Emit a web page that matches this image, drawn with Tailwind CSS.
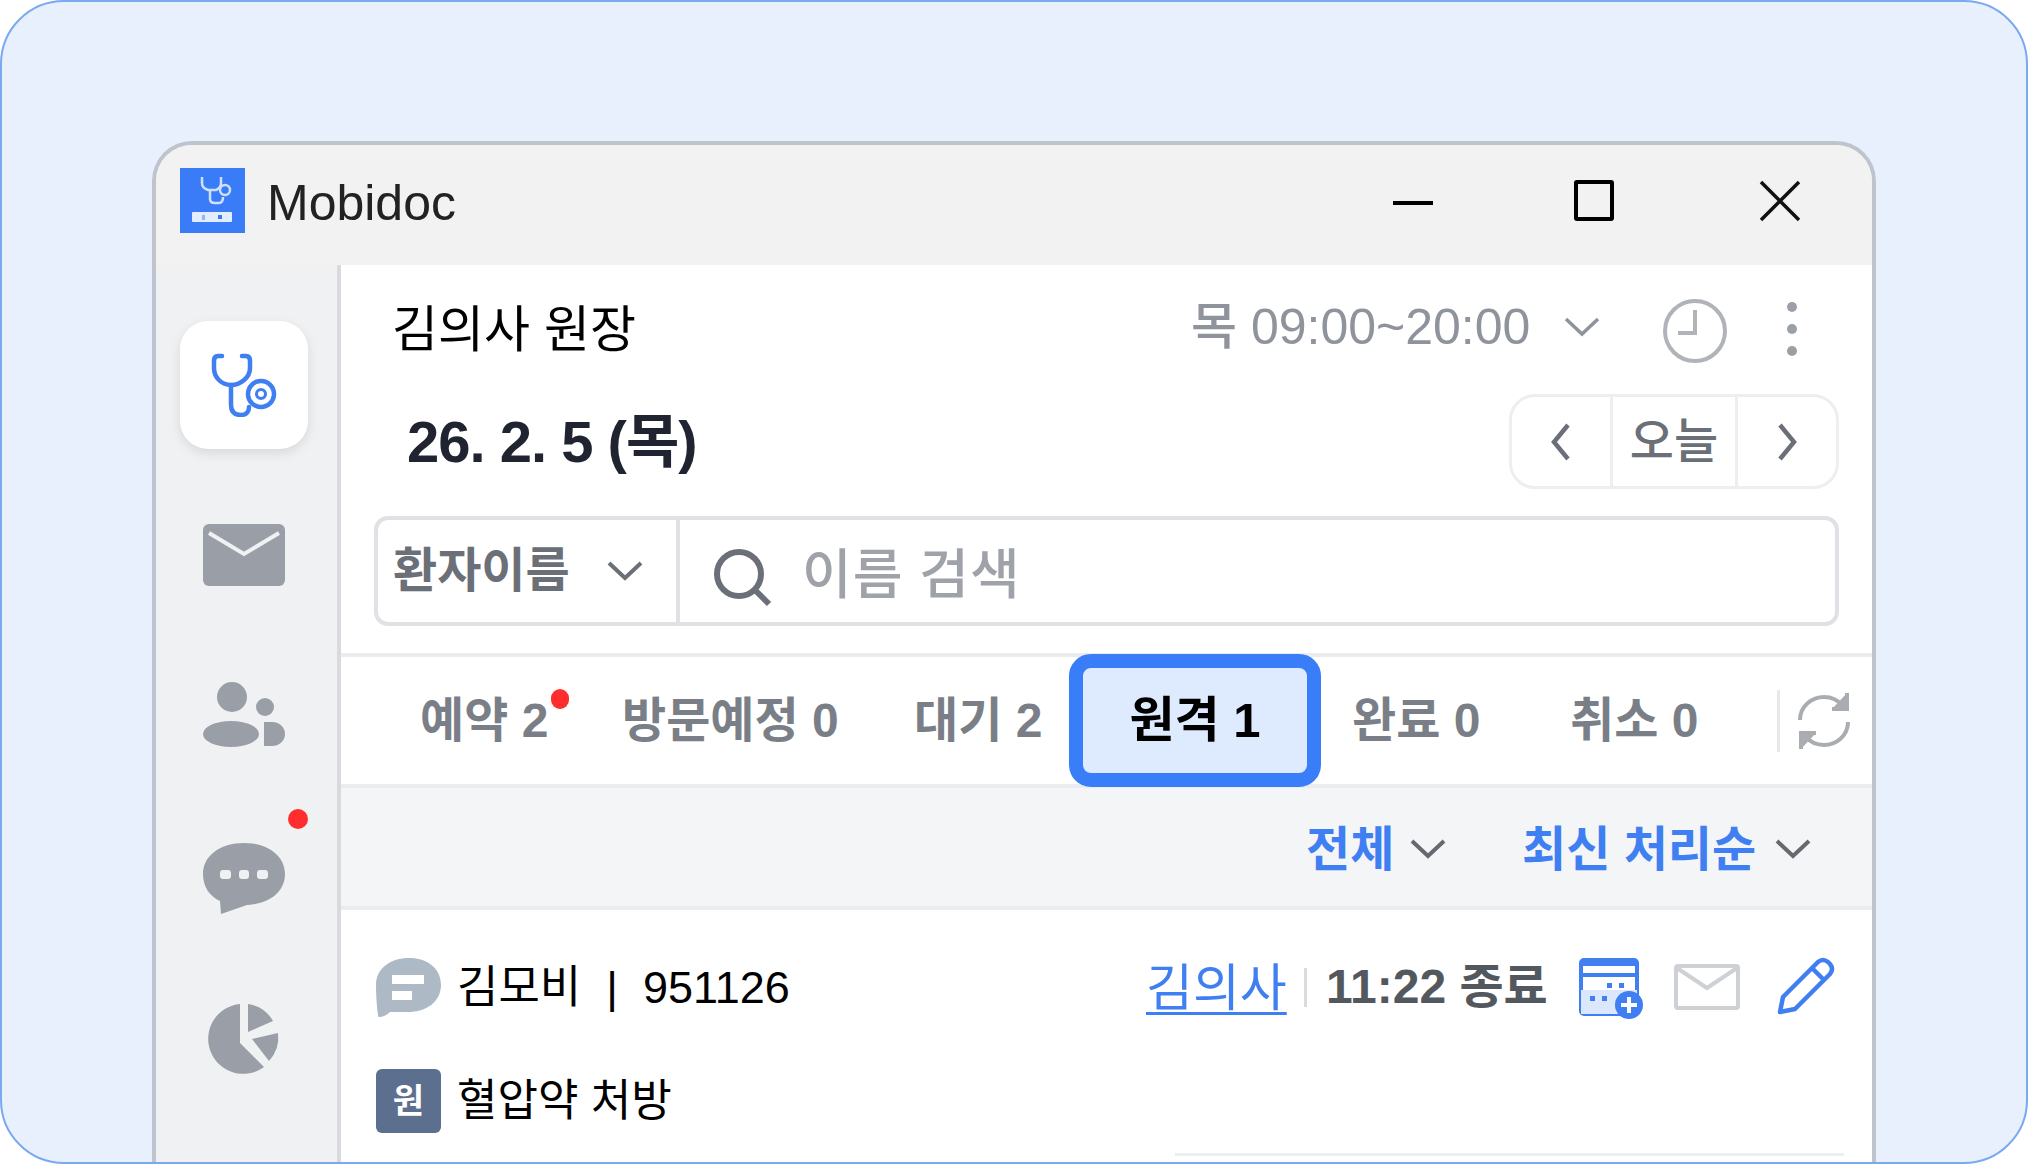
<!DOCTYPE html>
<html lang="ko">
<head>
<meta charset="utf-8">
<script src="https://cdn.jsdelivr.net/npm/@tailwindcss/browser@4"></script>
</head>
<body class="m-0">
<div class="w-[2028px] h-[1164px] overflow-hidden rounded-[64px] border-2 border-[#7aa9f0] bg-[#e8f0fe] pl-[150px] pt-[139px] font-['Liberation_Sans','Noto_Sans_CJK_KR',sans-serif] text-black">
  <div class="w-[1724px] h-[1100px] rounded-t-[40px] border-4 border-b-0 border-[#bfc4cc] overflow-hidden flex flex-col blur-[0.6px]">
    <!-- title bar -->
    <div class="h-[120px] shrink-0 bg-[#f2f2f2] flex items-center pl-[24px]">
      <svg class="w-[65px] h-[65px] shrink-0 mb-[9px]" viewBox="0 0 65 65">
        <rect width="65" height="65" fill="#3a7cf8"/>
        <g fill="none" stroke="#cfe0fd" stroke-width="2.5"><path d="M22 9v6q0 5 6 7h8q5-2 5-7V9"/><path d="M30 22v9q0 4 5 4h4q4 0 4-6"/><circle cx="45" cy="22" r="5"/></g>
        <rect x="12" y="44" width="40" height="10" rx="1" fill="#e3edfe"/>
        <rect x="22" y="47" width="3" height="5" fill="#8fb5fb"/><rect x="38" y="47" width="4" height="4" fill="#3a7cf8"/>
      </svg>
      <span class="ml-[22px] text-[50px] leading-none text-[#222] w-[1126px] mb-[4px]">Mobidoc</span>
      <span class="block w-[40px] h-[4px] bg-black mb-[4px]"></span>
      <span class="block w-[40px] h-[41px] ml-[141px] border-4 border-black rounded-[3px] mb-[10px]"></span>
      <svg class="w-[42px] h-[42px] ml-[145px] mb-[8px]" viewBox="0 0 42 42" fill="none" stroke="#111" stroke-width="3.5"><path d="M2 2l38 38M40 2L2 40"/></svg>
    </div>
    <div class="flex flex-1 min-h-0">
      <!-- sidebar -->
      <div class="w-[185px] shrink-0 bg-[#f0f1f3] border-r-4 border-[#d8dade] flex flex-col items-center pr-[5px]">
        <div class="mt-[56px] w-[128px] h-[128px] rounded-[28px] bg-white shadow-[0_4px_12px_rgba(0,0,0,0.10)] flex items-center justify-center">
          <svg class="w-[66px] h-[64px]" viewBox="0 0 66 64" fill="none" stroke="#3f7ff2" stroke-width="4.5" stroke-linecap="round">
            <path d="M11 3H7Q3 3 3 8v7c0 10 8 17 17 17s19-7 19-17V8q0-5-4-5h-4"/>
            <path d="M20 32v20c0 7 4 10 10 10s8-4 8-8"/>
            <circle cx="50" cy="41" r="13"/><circle cx="50" cy="41" r="4.5" stroke-width="3"/>
          </svg>
        </div>
        <svg class="mt-[75px] w-[82px] h-[62px]" viewBox="0 0 82 62"><rect width="82" height="62" rx="6" fill="#9a9ea6"/><path d="M6 9l35 21L76 9" fill="none" stroke="#f0f1f3" stroke-width="4"/></svg>
        <svg class="mt-[96px] w-[82px] h-[66px]" viewBox="0 0 82 66" fill="#9a9ea6"><circle cx="29" cy="15" r="15"/><ellipse cx="28" cy="52" rx="28" ry="13"/><circle cx="62" cy="25" r="9"/><path d="M61 40h8c8 0 13 6 13 12s-5 12-13 12h-8z"/></svg>
        <div class="relative mt-[95px] w-[82px] h-[74px]">
          <span class="absolute left-[85px] -top-[34px] w-[20px] h-[20px] rounded-full bg-[#ff2d2d]"></span>
          <svg class="w-[82px] h-[74px]" viewBox="0 0 82 74"><path d="M41 0c24 0 41 13 41 31S66 61 44 62L18 71l-1-13C6 53 0 43 0 31 0 13 17 0 41 0z" fill="#9a9ea6"/><g fill="#f0f1f3"><rect x="17" y="27" width="11" height="9" rx="3"/><rect x="36" y="27" width="10" height="9" rx="3"/><rect x="54" y="27" width="11" height="9" rx="3"/></g></svg>
        </div>
        <svg class="mt-[84px] ml-[4px] w-[78px] h-[76px]" viewBox="0 0 78 76" fill="#9a9ea6"><path d="M33 3V42L57 66A35 35 0 1 1 33 3z"/><path d="M41 3A35 35 0 0 1 66 20L41 31z"/><path d="M45 38L71 32A35 35 0 0 1 62 60z"/></svg>
      </div>
      <!-- main -->
      <div class="flex-1 min-w-0 bg-white flex flex-col">
        <div class="h-[124px] shrink-0 flex items-center pl-[51px]">
          <span class="text-[50px] leading-none w-[799px] whitespace-nowrap mt-[5px]">김의사 원장</span>
          <span class="text-[50px] leading-none text-[#8f949c] font-medium whitespace-nowrap w-[373px]">목 09:00~20:00</span>
          <svg class="w-[36px] h-[20px] shrink-0" viewBox="0 0 36 20" fill="none" stroke="#8f949c" stroke-width="3.5"><path d="M2 2l16 15L34 2"/></svg>
          <svg class="ml-[62px] mt-[8px] w-[66px] h-[66px] shrink-0" viewBox="0 0 66 66" fill="none" stroke="#b0b3b8" stroke-width="4"><circle cx="33" cy="33" r="30"/><path d="M33 12v23H16"/></svg>
          <span class="ml-[59px] mt-[4px] flex flex-col gap-[12px] shrink-0"><i class="block w-[10px] h-[10px] rounded-full bg-[#9ba0a7]"></i><i class="block w-[10px] h-[10px] rounded-full bg-[#9ba0a7]"></i><i class="block w-[10px] h-[10px] rounded-full bg-[#9ba0a7]"></i></span>
        </div>
        <div class="h-[105px] shrink-0 flex items-center justify-between pl-[66px] pr-[33px]">
          <span class="text-[58px] leading-none font-semibold text-[#1f2430] tracking-[-1px] whitespace-nowrap">26. 2. 5 (목)</span>
          <div class="w-[330px] h-[95px] rounded-[26px] border-[3px] border-[#eceef0] flex items-center">
            <span class="w-[101px] h-full border-r-[3px] border-[#eceef0] flex items-center justify-center"><svg class="w-[20px] h-[38px]" viewBox="0 0 20 38" fill="none" stroke="#6b7078" stroke-width="4.5"><path d="M17 2L3 19l14 17"/></svg></span>
            <span class="w-[125px] h-full border-r-[3px] border-[#eceef0] flex items-center justify-center text-[48px] font-medium text-[#6b7078]">오늘</span>
            <span class="flex-1 flex items-center justify-center"><svg class="w-[20px] h-[38px]" viewBox="0 0 20 38" fill="none" stroke="#6b7078" stroke-width="4.5"><path d="M3 2l14 17L3 36"/></svg></span>
          </div>
        </div>
        <div class="mt-[22px] ml-[33px] mr-[33px] h-[110px] shrink-0 rounded-[14px] border-4 border-[#dfe1e5] flex items-center">
          <div class="w-[302px] h-full border-r-4 border-[#dfe1e5] flex items-center pl-[15px]">
            <span class="text-[48px] leading-none font-semibold text-[#6b7078] w-[214px] whitespace-nowrap">환자이름</span>
            <svg class="w-[36px] h-[20px] shrink-0" viewBox="0 0 36 20" fill="none" stroke="#6b7078" stroke-width="4"><path d="M2 2l16 15L34 2"/></svg>
          </div>
          <svg class="ml-[33px] mt-[14px] w-[60px] h-[60px] shrink-0" viewBox="0 0 60 60" fill="none" stroke="#6b7078" stroke-width="6"><circle cx="26" cy="26" r="22"/><path d="M42 42l14 14"/></svg>
          <span class="ml-[29px] mt-[8px] text-[54px] leading-none font-medium text-[#9fa3a9] whitespace-nowrap tracking-[1px]">이름 검색</span>
        </div>
        <div class="mt-[27px] h-[135px] shrink-0 border-y-4 border-[#ebecef] flex items-center pl-[79px] text-[48px] font-semibold text-[#7a7f87]">
          <span class="relative w-[202px] whitespace-nowrap">예약 2<i class="absolute left-[131px] top-[4px] w-[18px] h-[20px] rounded-full bg-[#ff2d2d]"></i></span>
          <span class="w-[292px] whitespace-nowrap">방문예정 0</span>
          <span class="w-[155px] whitespace-nowrap">대기 2</span>
          <span class="w-[252px] h-[133px] -my-[5px] shrink-0 rounded-[22px] border-[14px] border-[#397df8] bg-[#deeafd] flex items-center justify-center text-black text-[49px] font-bold whitespace-nowrap">원격 1</span>
          <span class="ml-[31px] w-[218px] whitespace-nowrap">완료 0</span>
          <span class="w-[207px] whitespace-nowrap">취소 0</span>
          <span class="block w-[3px] h-[62px] bg-[#e7e8ea]"></span>
          <svg class="ml-[16px] w-[56px] h-[58px] shrink-0" viewBox="0 0 56 58" fill="none" stroke="#a9adb2" stroke-width="4"><path d="M4 28C4 14 16 5 28 5c8 0 14 3 19 9"/><path d="M52 30c0 14-12 23-24 23-8 0-14-3-19-9"/><path d="M51 1v16H36" fill="#a9adb2"/><path d="M5 57V41h15" fill="#a9adb2"/></svg>
        </div>
        <div class="h-[118px] shrink-0 bg-[#f4f5f7] flex items-center pl-[965px] text-[48px] font-semibold text-[#3f7ff2]">
          <span class="w-[104px] whitespace-nowrap mt-[6px]">전체</span>
          <svg class="w-[36px] h-[20px] shrink-0 mt-[4px]" viewBox="0 0 36 20" fill="none" stroke="#666a70" stroke-width="4"><path d="M2 2l16 15L34 2"/></svg>
          <span class="ml-[76px] w-[253px] whitespace-nowrap mt-[6px]">최신 처리순</span>
          <svg class="w-[36px] h-[20px] shrink-0 mt-[4px]" viewBox="0 0 36 20" fill="none" stroke="#666a70" stroke-width="4"><path d="M2 2l16 15L34 2"/></svg>
        </div>
        <div class="border-t-4 border-[#ebecef] flex-1 pl-[35px] pr-[28px]">
          <div class="h-[154px] flex items-center">
            <svg class="w-[65px] h-[60px] shrink-0 mt-[2px]" viewBox="0 0 65 60"><path d="M33 0c18 0 32 10 32 27S50 54 32 54H14q-5 5-11 5-1 0-1-2C1 50 0 38 0 27 0 10 15 0 33 0z" fill="#aeb9c6"/><rect x="16" y="17" width="32" height="9" fill="#fff"/><rect x="16" y="33" width="20" height="9" fill="#fff"/></svg>
            <span class="ml-[16px] w-[689px] text-[45px] leading-none whitespace-nowrap">김모비 &nbsp;|&nbsp; 951126</span>
            <span class="w-[158px] mt-[4px] text-[51px] leading-[60px] text-[#3f7ff2] underline underline-offset-[6px] decoration-[3px] whitespace-nowrap">김의사</span>
            <span class="block w-[3px] h-[39px] bg-[#d9dbde]"></span>
            <span class="ml-[19px] w-[253px] text-[48px] leading-none font-semibold text-[#53585f] whitespace-nowrap">11:22 종료</span>
            <svg class="w-[66px] h-[62px] shrink-0 mt-[4px]" viewBox="0 0 66 62"><rect x="2" y="2" width="56" height="54" rx="3" fill="#fff" stroke="#3f7ff2" stroke-width="4"/><rect x="2" y="2" width="56" height="6" fill="#3f7ff2"/><rect x="2" y="15" width="56" height="4" fill="#3f7ff2"/><rect x="2" y="32" width="56" height="24" fill="#dbe7fd"/><g fill="#3f7ff2"><rect x="11" y="38" width="5" height="5"/><rect x="23" y="38" width="5" height="5"/><rect x="28" y="25" width="5" height="5"/><rect x="40" y="25" width="5" height="5"/></g><circle cx="50" cy="47" r="14" fill="#3f7ff2"/><path d="M50 39v16M42 47h16" stroke="#fff" stroke-width="4"/></svg>
            <svg class="ml-[29px] w-[66px] h-[46px] shrink-0" viewBox="0 0 66 46" fill="none" stroke="#cdd0d4" stroke-width="4"><rect x="2" y="2" width="62" height="42" rx="2"/><path d="M3 4l30 20L63 4"/></svg>
            <svg class="ml-[37px] w-[58px] h-[58px] shrink-0 mb-[2px]" viewBox="0 0 58 58" fill="none" stroke="#3f7ff2" stroke-width="4.5" stroke-linejoin="round"><path d="M3 55l3-15L41 5q5-4 10 0l2 2q4 5 0 10L18 52z"/><path d="M35 11l12 12" /></svg>
          </div>
          <div class="flex items-center mt-[5px]">
            <span class="w-[65px] h-[64px] shrink-0 rounded-[6px] bg-[#5c6f8f] flex items-center justify-center text-white text-[34px] font-bold leading-none">원</span>
            <span class="ml-[16px] text-[44px] leading-none whitespace-nowrap">혈압약 처방</span>
          </div>
          <div class="ml-[799px] mt-[20px] h-[3px] bg-[#eeeff1]"></div>
        </div>
      </div>
    </div>
  </div>
</div>
</body>
</html>
